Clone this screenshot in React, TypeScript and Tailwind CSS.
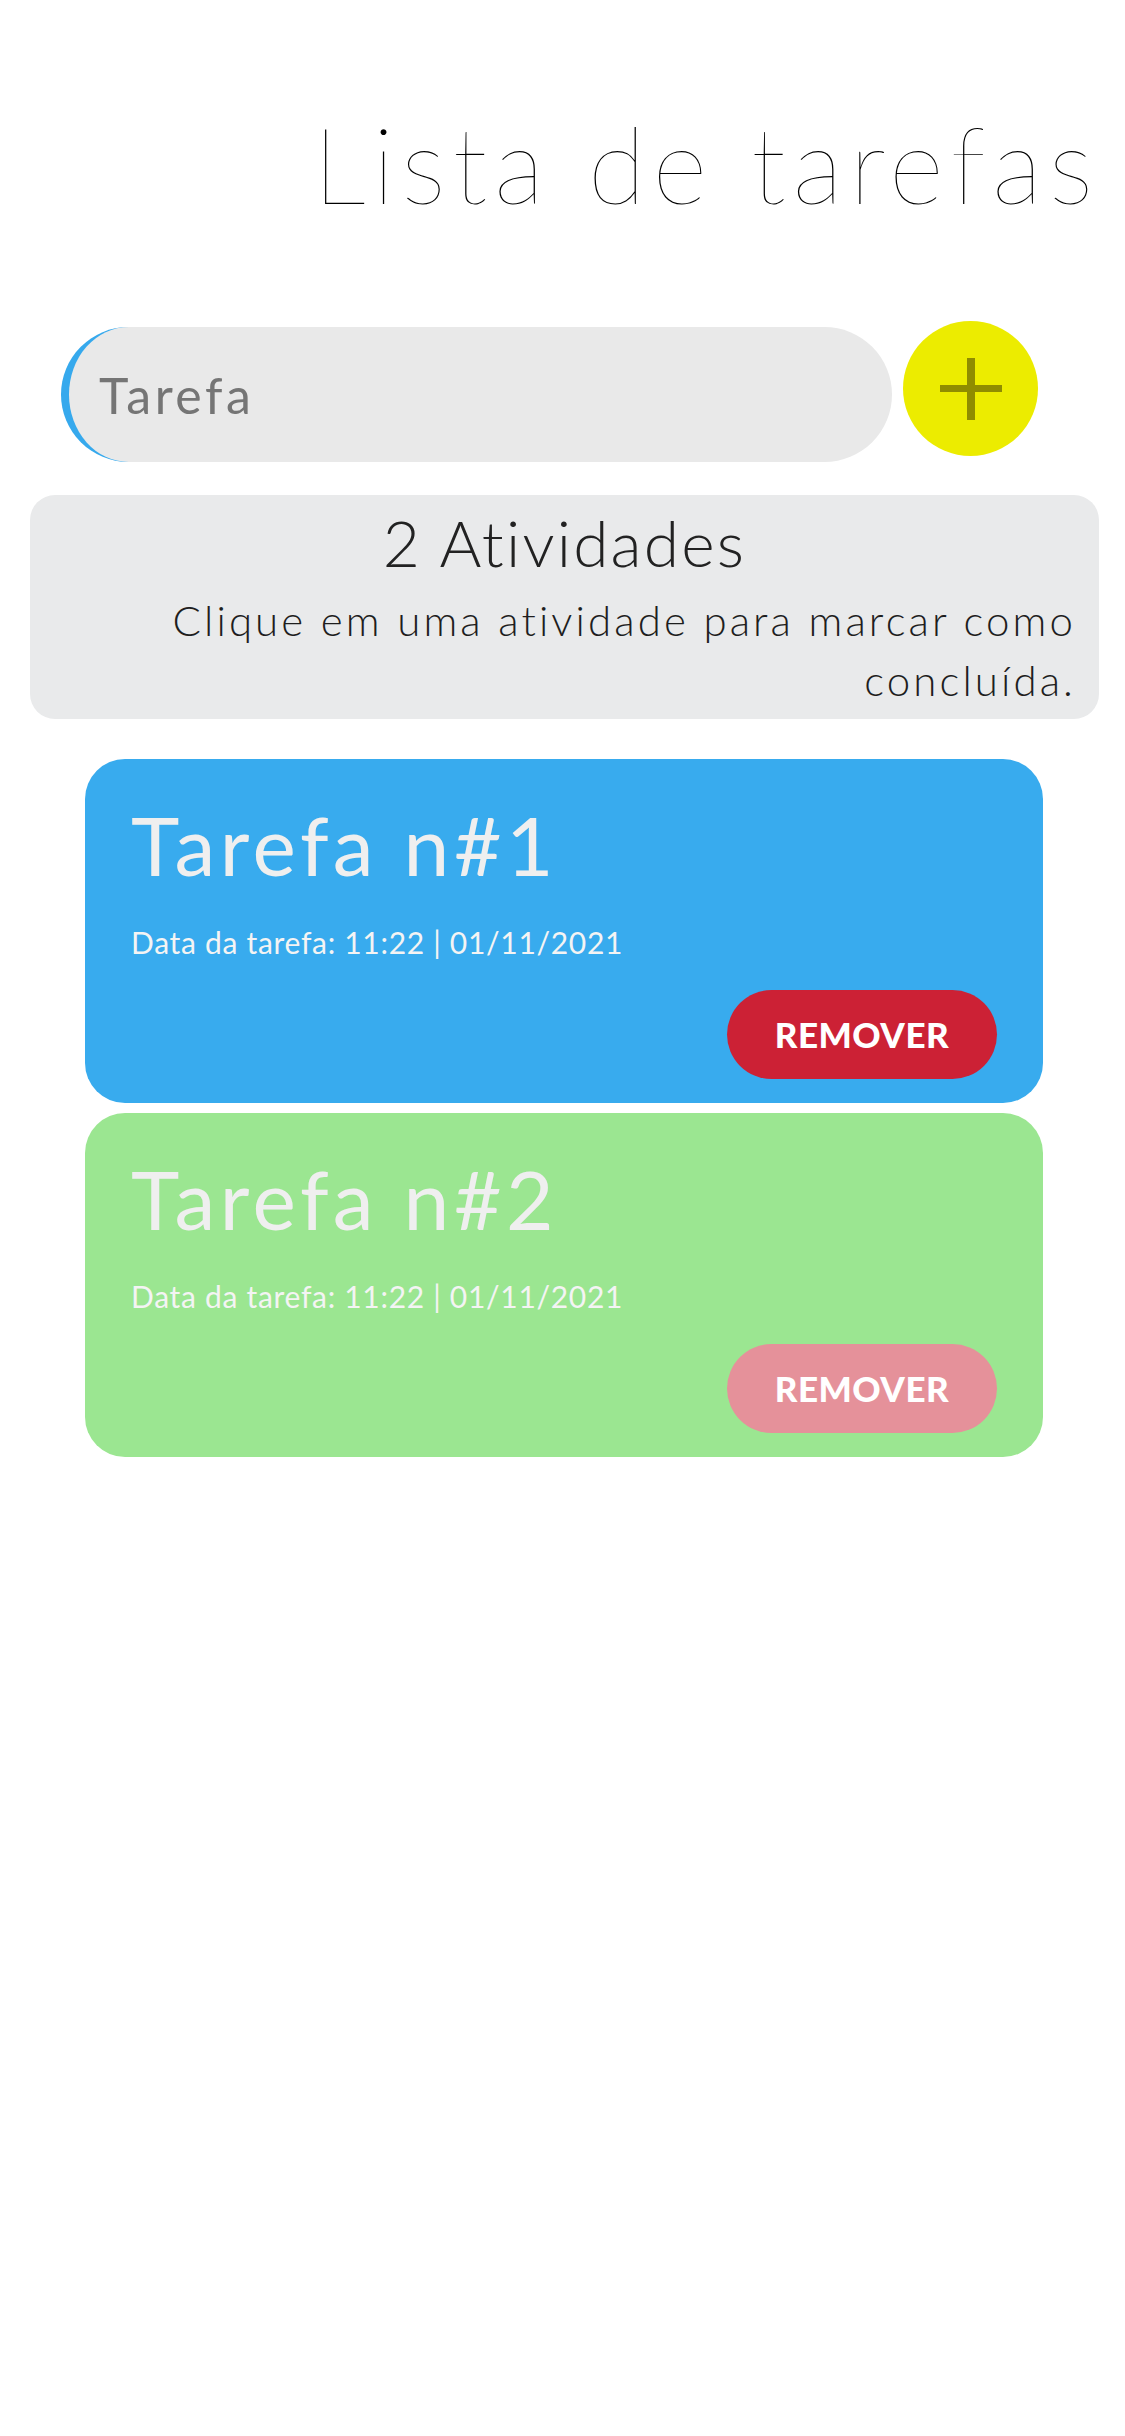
import React from "react";

function Card({ title, bg, btn }: { title: string; bg: string; btn: string }) {
  return (
    <div className={`ml-[85px] flex h-[344px] w-[958px] flex-col rounded-[40px] ${bg} pl-[46px] pr-[46px] pt-[38px]`}>
      <div className="text-[82px] leading-[94px] font-normal text-[#efefef] tracking-[4.5px]">{title}</div>
      <div className="mt-[33px] text-[30px] leading-[36px] font-normal text-[#f4f4f4] tracking-[0.7px]">
        Data da tarefa: 11:22 | 01/11/2021
      </div>
      <div className="mt-[30px] flex justify-end">
        <button className={`flex h-[89px] w-[270px] items-center justify-center rounded-full ${btn} text-[35px] leading-none font-black text-white tracking-[0.5px]`}>
          REMOVER
        </button>
      </div>
    </div>
  );
}

export default function App() {
  return (
    <div className="min-h-[2436px] w-[1125px] bg-white font-['Lato',sans-serif]">
      <h1 className="pt-[110px] pr-[25px] text-right text-[106px] leading-[106px] font-extralight tracking-[6.8px] text-black">
        Lista de tarefas
      </h1>
      <div className="mt-[105px] flex items-start pl-[61px]">
        <input
          className="mt-[6px] h-[135px] w-[831px] rounded-full border-l-8 border-[#36a9ed] bg-[#e9e9e9] pl-[30px] text-[50px] tracking-[3.5px] text-[#333] outline-none placeholder:text-[#757575] font-['Lato',sans-serif]"
          placeholder="Tarefa"
        />
        <button className="ml-[11px] flex h-[135px] w-[135px] items-center justify-center rounded-full bg-[#ecec00]">
          <svg width="62" height="62" viewBox="0 0 62 62">
            <rect x="27" y="0" width="8" height="62" fill="#8f8c00" />
            <rect x="0" y="27" width="62" height="7" fill="#8f8c00" />
          </svg>
        </button>
      </div>
      <div className="mt-[33px] ml-[30px] w-[1069px] rounded-[25px] bg-[#e9eaeb] pt-[11px] pb-[9px]">
        <div className="text-center text-[64px] leading-[73px] font-light tracking-[2.2px] text-[#222]">2 Atividades</div>
        <div className="mt-[11px] pr-[23px] text-right text-[42px] leading-[60px] font-light tracking-[3.1px] text-[#1e1e1e]">
          Clique em uma atividade para marcar como
          <br />
          concluída.
        </div>
      </div>
      <div className="mt-[40px] flex flex-col gap-[10px]">
        <Card title="Tarefa n#1" bg="bg-[#38abee]" btn="bg-[#cc2135]" />
        <Card title="Tarefa n#2" bg="bg-[#9be691]" btn="bg-[#e5919a]" />
      </div>
    </div>
  );
}
